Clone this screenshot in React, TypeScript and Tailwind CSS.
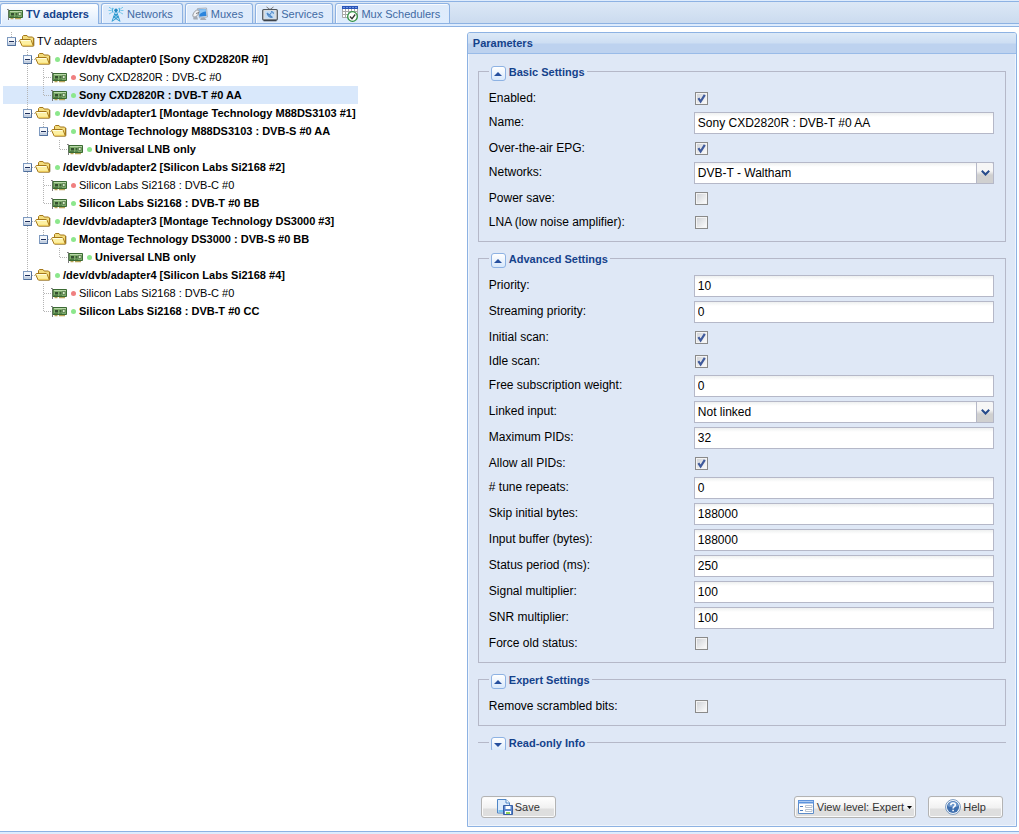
import { useState, type ReactNode } from "react";

function CardIcon() {
  return (
    <svg viewBox="0 0 16 16" aria-hidden="true" className="size-4 shrink-0">
      <path d="M0 3.500h1.500V14" fill="none" stroke="#7d7d7d" />
      <path d="M2 4.500h13.500v7H2z" fill="#7fae6c" stroke="#3b6a33" />
      <path d="M3 5h12v1H3z" fill="#b9d8a8" />
      <path d="M4 7h3v2.500H4z" fill="#35502f" />
      <path d="M8.500 7h2v2.500h-2z" fill="#3f6237" />
      <path d="M11.500 6.500h2.500v3h-2.500z" fill="#d3e8c4" stroke="#3f6237" strokeWidth=".6" />
      <path d="M3 10h4v1H3zM8 10.200h3v.8H8z" fill="#4f7f43" />
      <path d="M3.500 12h3v1.200h-3zM8 12h6v1.200H8z" fill="#b7a457" />
    </svg>
  );
}

function FolderIcon() {
  return (
    <svg viewBox="0 0 16 16" aria-hidden="true" className="size-4 shrink-0">
      <path d="M4 13.500h10.500l.8-1V5" fill="none" stroke="#c9c3b0" />
      <path d="M3.500 12.500V3.500l1-1h3.500l1.200 1.500h4.300l1 1v7.500z" fill="#f3dc7c" stroke="#a5781a" />
      <path d="M3.200 13 .6 7.500l.7-1h10l1 1L14.300 13z" fill="#fdf0a2" stroke="#a5781a" />
      <path d="M1.800 7.500h9.600" stroke="#fffde0" />
      <path d="M3.600 12.300h9.800" stroke="#f2cf58" />
    </svg>
  );
}

function AntennaIcon() {
  return (
    <svg viewBox="0 0 16 16" aria-hidden="true" className="size-4 shrink-0" fill="none" stroke="#2f9bd0">
      <path d="M8 4 4 15.500M8 4l4 11.500M6.500 8.500h3M5.600 11.200h4.800M6.500 8.500l4 2.700M9.500 8.500l-4 2.700M5.600 11.200l6 3.800M10.400 11.200l-6 3.800" strokeWidth="1" />
      <circle cx="8" cy="4.200" r="1.700" fill="#2389c2" stroke="none" />
      <path d="M5.300 2a3.200 3.200 0 0 0 0 4.600M10.700 2a3.200 3.200 0 0 1 0 4.600" stroke="#4db3e0" strokeWidth="1.200" />
      <path d="M1 1.200 3.800 3M.5 4.500h3M1 8l2.800-1.500M15 1.200 12.200 3M15.500 4.500h-3M15 8l-2.800-1.500" stroke="#7cc8ea" />
    </svg>
  );
}

function DishIcon() {
  return (
    <svg viewBox="0 0 16 16" aria-hidden="true" className="size-4 shrink-0">
      <path d="M5.500 2.500 14.500 2l1 9-8 1z" fill="#dfe4ea" stroke="#9aa6b4" strokeWidth=".8" />
      <path d="M6.500 3.500 13.700 3l.8 7-7 .8z" fill="#2a84dc" />
      <path d="M6.500 3.500 13.700 3l.3 2.500c-3 0-5 1.500-7 3.500z" fill="#8cc6f6" />
      <ellipse cx="4" cy="7.500" rx="2.200" ry="4.200" transform="rotate(35 4 7.500)" fill="#f1f2f4" stroke="#94979d" strokeWidth=".9" />
      <path d="m4 7.500 3-1" stroke="#777" />
      <path d="M1 11.500 5 10l1 3.500H1.500zM9 12h4l1.500 2H8z" fill="#a4abb4" />
    </svg>
  );
}

function TelevisionIcon() {
  return (
    <svg viewBox="0 0 16 16" aria-hidden="true" className="size-4 shrink-0">
      <path d="M4.500 1 8 3.500 11.500 1" fill="none" stroke="#777" />
      <rect x=".7" y="3.500" width="14.600" height="10.500" rx="1" fill="#d9dcdf" stroke="#50575e" strokeWidth="1.200" />
      <rect x="3" y="5" width="9.500" height="7.500" fill="#c3ddf6" />
      <path d="M5 7c.6 3 2.600 4.500 5.500 4.500M5 7l5.500 4.500M7.500 9l2-2.500M9 5.500c1.500 0 2.300.8 2.500 2.300" fill="none" stroke="#4d86c6" strokeWidth="1.100" />
      <path d="M1.500 14.500h13" stroke="#3d444b" strokeWidth="1.600" />
    </svg>
  );
}

function ScheduleIcon() {
  return (
    <svg viewBox="0 0 16 16" aria-hidden="true" className="size-4 shrink-0">
      <path d="M.5.500h15v11H.5z" fill="#fff" stroke="#a8a8a8" />
      <path d="M0 0h16v3H0z" fill="#2a55b8" />
      <path d="M1 1.500h14" stroke="#6f95e0" strokeDasharray="2 1" />
      <path d="M.5 5.500h15M.5 8.500h15M3.500 3v8.500M6.500 3v8.500M9.500 3v8.500M12.500 3v8.500" stroke="#a8a8a8" />
      <circle cx="10.500" cy="10.500" r="4.800" fill="#fff" stroke="#2f9140" strokeWidth="1.300" />
      <path d="m8 10.500 2 2.200L13.200 8.500" fill="none" stroke="#333" strokeWidth="1.300" />
    </svg>
  );
}

function SaveIcon() {
  return (
    <svg viewBox="0 0 16 16" aria-hidden="true" className="size-4 shrink-0">
      <path d="M.5.500h8.500l3.500 3.500v10H.5z" fill="#dcebfc" stroke="#4f86c6" />
      <path d="M9 .5V4h3.500" fill="#fff" stroke="#4f86c6" />
      <path d="M1.500 11h5v2h-5z" fill="#7bc5f0" />
      <path d="M6.500 6.500h9v9h-9z" fill="#5a86cc" stroke="#3960a6" />
      <path d="M8.500 7h5v3h-5z" fill="#fff" />
      <path d="M8 12h6v3H8z" fill="#fff" />
      <path d="M9 13h4v2H9z" fill="#8fd158" />
    </svg>
  );
}

function FormIcon() {
  return (
    <svg viewBox="0 0 16 16" aria-hidden="true" className="size-4 shrink-0">
      <path d="M.5 1.500h15v13H.5z" fill="#fff" stroke="#5d8cc9" />
      <path d="M0 1h16v3.500H0z" fill="#5d93dc" />
      <path d="M1 2.500h14" stroke="#a9c9f2" />
      <path d="M2 7.500h3M2 11.500h3" stroke="#4f7fc0" />
      <path d="M7.500 6.500H14v2H7.500zM7.500 10.500H14v2H7.500z" fill="#fff" stroke="#b8c2cf" />
    </svg>
  );
}

function HelpIcon() {
  return (
    <svg viewBox="0 0 16 16" aria-hidden="true" className="size-4 shrink-0">
      <circle cx="8" cy="8" r="7.400" fill="#fff" stroke="#7396bf" />
      <circle cx="8" cy="8" r="6.100" fill="#3f6fae" />
      <path d="M2.500 7a5.600 5.600 0 0 1 11 0c-3 1.600-8 1.600-11 0z" fill="#6d98cc" />
      <path d="M5.800 6.200c0-3 4.500-2.900 4.500-.2 0 1.700-2.200 1.700-2.200 3.400M8.100 10.800v1.500" fill="none" stroke="#fff" strokeWidth="1.600" />
    </svg>
  );
}

const tabs: { name: string; icon: ReactNode }[] = [
  { name: "TV adapters", icon: <CardIcon /> },
  { name: "Networks", icon: <AntennaIcon /> },
  { name: "Muxes", icon: <DishIcon /> },
  { name: "Services", icon: <TelevisionIcon /> },
  { name: "Mux Schedulers", icon: <ScheduleIcon /> },
];

function TabBar() {
  const [active, setActive] = useState("TV adapters");
  return (
    <div className="border-y border-[#8db2e3] bg-[#deecfd] pb-0.5">
      <div role="tablist" className="flex h-[22px] items-end gap-0.5 border-b border-[#8db2e3] bg-linear-to-b from-[#dce8f6] to-[#cbdbef]">
        {tabs.map((tab) => (
          <button
            key={tab.name}
            role="tab"
            aria-selected={tab.name === active}
            onClick={() => setActive(tab.name)}
            className={`flex items-center gap-[3px] rounded-t-[3px] border border-b-0 border-[#8db2e3] pr-[9px] pl-1.5 text-[11px] leading-4 whitespace-nowrap shadow-[inset_1px_1px_0_0_#f8fbff] ${
              tab.name === active
                ? "-mb-px h-[21px] bg-linear-to-b from-white to-[#deecfd] font-bold text-[#15428b]"
                : "h-5 bg-linear-to-b from-[#dfebfa] to-[#deecfd] text-[#416aa3]"
            }`}
          >
            {tab.icon}
            {tab.name}
          </button>
        ))}
      </div>
    </div>
  );
}

type TreeNode = { name: string; on?: boolean; bold?: boolean; selected?: boolean; children?: TreeNode[] };

const tree: TreeNode = {
  name: "TV adapters",
  children: [
    {
      name: "/dev/dvb/adapter0 [Sony CXD2820R #0]", on: true, bold: true,
      children: [
        { name: "Sony CXD2820R : DVB-C #0", on: false },
        { name: "Sony CXD2820R : DVB-T #0 AA", on: true, bold: true, selected: true },
      ],
    },
    {
      name: "/dev/dvb/adapter1 [Montage Technology M88DS3103 #1]", on: true, bold: true,
      children: [
        {
          name: "Montage Technology M88DS3103 : DVB-S #0 AA", on: true, bold: true,
          children: [{ name: "Universal LNB only", on: true, bold: true }],
        },
      ],
    },
    {
      name: "/dev/dvb/adapter2 [Silicon Labs Si2168 #2]", on: true, bold: true,
      children: [
        { name: "Silicon Labs Si2168 : DVB-C #0", on: false },
        { name: "Silicon Labs Si2168 : DVB-T #0 BB", on: true, bold: true },
      ],
    },
    {
      name: "/dev/dvb/adapter3 [Montage Technology DS3000 #3]", on: true, bold: true,
      children: [
        {
          name: "Montage Technology DS3000 : DVB-S #0 BB", on: true, bold: true,
          children: [{ name: "Universal LNB only", on: true, bold: true }],
        },
      ],
    },
    {
      name: "/dev/dvb/adapter4 [Silicon Labs Si2168 #4]", on: true, bold: true,
      children: [
        { name: "Silicon Labs Si2168 : DVB-C #0", on: false },
        { name: "Silicon Labs Si2168 : DVB-T #0 CC", on: true, bold: true },
      ],
    },
  ],
};

function Guide({ d }: { d: string }) {
  return (
    <svg viewBox="0 0 16 18" aria-hidden="true" className="h-[18px] w-4 shrink-0">
      <path d={d} fill="none" stroke="#b4b4b4" strokeDasharray="1 1" shapeRendering="crispEdges" />
    </svg>
  );
}

function Branch({ node, last, guides }: { node: TreeNode; last: boolean; guides: boolean[] }) {
  const [open, setOpen] = useState(true);
  const elbow = last ? "M8.500 0v9M9 9.500h7" : "M8.500 0v18M9 9.500h7";
  return (
    <li>
      <div className={`flex h-[18px] items-center ${node.selected ? "bg-[#d9e8fb]" : ""}`}>
        {guides.map((line, i) => (line ? <Guide key={i} d="M8.500 0v18" /> : <span key={i} className="w-4 shrink-0" />))}
        {node.children ? (
          <button aria-label={`Toggle ${node.name}`} aria-expanded={open} onClick={() => setOpen(!open)} className="h-[18px] w-4 shrink-0">
            <svg viewBox="0 0 16 18" aria-hidden="true" className="h-[18px] w-4">
              <path d={elbow} fill="none" stroke="#b4b4b4" strokeDasharray="1 1" shapeRendering="crispEdges" />
              <rect x="4.500" y="5.500" width="8" height="8" fill="#f4f7fb" stroke="#7e9ac0" />
              <path d="M5 10.500h7V13H5z" fill="#c3cfe0" />
              <path d="M12.500 6v7.500H5" fill="none" stroke="#4f6f9c" />
              <path d={open ? "M6 9.500h5" : "M6 9.500h5M8.500 7v5"} stroke="#1d2f5c" />
            </svg>
          </button>
        ) : (
          <Guide d={elbow} />
        )}
        {node.children ? <FolderIcon /> : <CardIcon />}
        {node.on !== undefined && (
          <span className={`mr-px ml-1 size-[5px] shrink-0 rounded-full ${node.on ? "bg-[#8ce78c]" : "bg-[#f08080]"}`} />
        )}
        <a href="#" className={`pl-0.5 whitespace-nowrap ${node.bold ? "font-bold" : ""}`}>
          {node.name}
        </a>
      </div>
      {node.children && open && (
        <ul>
          {node.children.map((child, i) => (
            <Branch
              key={child.name}
              node={child}
              last={i === node.children!.length - 1}
              guides={[...guides, guides.length > 0 && !last]}
            />
          ))}
        </ul>
      )}
    </li>
  );
}

function TextField({ label, value }: { label: string; value: string }) {
  return (
    <label className="mb-1 flex h-[22px]">
      <span className="w-[205px] shrink-0 pt-[3px] leading-[14px]">{label}:</span>
      <input
        type="text"
        defaultValue={value}
        className="h-[22px] min-w-0 flex-1 border border-[#b5b8c8] bg-white bg-linear-to-b from-[#eef0f0] to-white to-20% px-[3px] outline-none focus:border-[#7eadd9]"
      />
    </label>
  );
}

function SelectField({ label, value }: { label: string; value: string }) {
  return (
    <label className="mb-1 flex h-[22px]">
      <span className="w-[205px] shrink-0 pt-[3px] leading-[14px]">{label}:</span>
      <span className="grid min-w-0 flex-1 grid-cols-[1fr_18px]">
        <select
          defaultValue={value}
          className="col-span-2 col-start-1 row-start-1 h-[22px] appearance-none border border-[#b5b8c8] bg-white bg-linear-to-b from-[#eef0f0] to-white to-20% px-[3px] outline-none"
        >
          <option>{value}</option>
        </select>
        <span className="pointer-events-none col-start-2 row-start-1 flex items-center justify-center rounded-tr-[2px] border border-[#b5b8c8] bg-linear-to-b from-[#f6f6f6] from-40% to-[#d0d0d0] to-60%">
          <svg viewBox="0 0 9 6" aria-hidden="true" className="h-1.5 w-[9px]">
            <path d="m.8.8 3.700 3.700L8.200.8" fill="none" stroke="#264a8b" strokeWidth="2" />
          </svg>
        </span>
      </span>
    </label>
  );
}

function CheckField({ label, checked = false }: { label: string; checked?: boolean }) {
  return (
    <label className="mb-1 flex h-5">
      <span className="w-[205px] shrink-0 pt-[3px] leading-[14px]">{label}:</span>
      <span className="mt-1 ml-px grid size-[13px]">
        <input
          type="checkbox"
          defaultChecked={checked}
          className="peer col-start-1 row-start-1 size-[13px] appearance-none border border-[#8a8a8a] bg-linear-to-br from-[#cdd0d5] to-white shadow-[inset_0_0_0_1px_#f4f4f4]"
        />
        <svg viewBox="0 0 13 13" aria-hidden="true" className="pointer-events-none col-start-1 row-start-1 hidden size-[13px] peer-checked:block">
          <path d="M3.400 6.200 5.600 9.500 9.800 2.800" fill="none" stroke="#3f5a9c" strokeWidth="2.200" />
        </svg>
      </span>
    </label>
  );
}

function Section({ title, startOpen = true, children }: { title: string; startOpen?: boolean; children?: ReactNode }) {
  const [open, setOpen] = useState(startOpen);
  return (
    <fieldset className={`mb-[9px] min-w-0 border-[#b5b8c8] pr-[11px] ${open ? "border pt-[9px] pb-[5px] pl-2.5" : "border-t pl-[11px]"}`}>
      <legend className={`h-[15px] px-0.5 ${open ? "" : "overflow-hidden"}`}>
        <span className="flex gap-[3px] text-[11px] font-bold text-[#15428b]">
          <button
            type="button"
            aria-label={`Toggle ${title}`}
            aria-expanded={open}
            onClick={() => setOpen(!open)}
            className="mt-0.5 flex size-[15px] items-center justify-center rounded-[3px] border border-[#8db2e3] bg-linear-to-b from-white to-[#d8e8fb]"
          >
            <svg viewBox="0 0 8 4" aria-hidden="true" className="h-1 w-2">
              <path d={open ? "M0 4h8L4 0z" : "M0 0h8L4 4z"} fill="#264f9e" />
            </svg>
          </button>
          <span className="leading-4">{title}</span>
        </span>
      </legend>
      {open && children}
    </fieldset>
  );
}

function ToolButton({ icon, children }: { icon: ReactNode; children: ReactNode }) {
  return (
    <button
      type="button"
      className="flex h-[22px] min-w-[75px] items-center justify-center gap-0.5 rounded-[3px] border border-[#b3b3b3] bg-linear-to-b from-white via-[#f1f1f1] via-55% to-[#dedede] to-60% px-[3px] text-[11px] text-[#333] shadow-[inset_0_0_0_1px_#fafafa]"
    >
      {icon}
      {children}
    </button>
  );
}

export default function App() {
  return (
    <div className="flex min-h-screen flex-col bg-[#deecfd] pt-px font-['Liberation_Sans',Arial,sans-serif] text-[12px] text-black">
      <TabBar />
      <main className="mb-0.5 flex flex-1 border-b border-[#8db2e3] bg-white pt-[5px] pr-0.5 pb-1">
        <nav aria-label="TV adapters" className="min-w-0 flex-1 pl-[3px] text-[11px]">
          <ul className="w-[355px]">
            <Branch node={tree} last guides={[]} />
          </ul>
        </nav>
        <form className="flex w-[54.1%] flex-col rounded-t-[3px] border border-[#8db2e3] bg-[#dfe8f6] shadow-[inset_0_0_0_1px_#f0f5fc]">
          <h2 className="h-[21px] rounded-t-[2px] border-b border-[#99bbe8] bg-linear-to-b from-[#dce9f7] via-[#cddef3] via-50% to-[#bdd2ef] to-55% pl-[5px] text-[11px] leading-[21px] font-bold text-[#15428b]">
            Parameters
          </h2>
          <div className="flex-1 px-2.5 pt-2.5">
            <Section title="Basic Settings">
              <CheckField label="Enabled" checked />
              <TextField label="Name" value="Sony CXD2820R : DVB-T #0 AA" />
              <CheckField label="Over-the-air EPG" checked />
              <SelectField label="Networks" value="DVB-T - Waltham" />
              <CheckField label="Power save" />
              <CheckField label="LNA (low noise amplifier)" />
            </Section>
            <Section title="Advanced Settings">
              <TextField label="Priority" value="10" />
              <TextField label="Streaming priority" value="0" />
              <CheckField label="Initial scan" checked />
              <CheckField label="Idle scan" checked />
              <TextField label="Free subscription weight" value="0" />
              <SelectField label="Linked input" value="Not linked" />
              <TextField label="Maximum PIDs" value="32" />
              <CheckField label="Allow all PIDs" checked />
              <TextField label="# tune repeats" value="0" />
              <TextField label="Skip initial bytes" value="188000" />
              <TextField label="Input buffer (bytes)" value="188000" />
              <TextField label="Status period (ms)" value="250" />
              <TextField label="Signal multiplier" value="100" />
              <TextField label="SNR multiplier" value="100" />
              <CheckField label="Force old status" />
            </Section>
            <Section title="Expert Settings">
              <CheckField label="Remove scrambled bits" />
            </Section>
            <Section title="Read-only Info" startOpen={false} />
          </div>
          <div className="flex gap-3 pr-[13px] pb-2 pl-[13px]">
            <ToolButton icon={<SaveIcon />}>Save</ToolButton>
            <div className="flex-1" />
            <ToolButton icon={<FormIcon />}>
              <span className="px-px">View level: Expert</span>
              <svg viewBox="0 0 5 3" aria-hidden="true" className="h-[3px] w-[5px]">
                <path d="M0 0h5L2.500 3z" fill="#000" />
              </svg>
            </ToolButton>
            <ToolButton icon={<HelpIcon />}>Help</ToolButton>
          </div>
        </form>
      </main>
    </div>
  );
}
